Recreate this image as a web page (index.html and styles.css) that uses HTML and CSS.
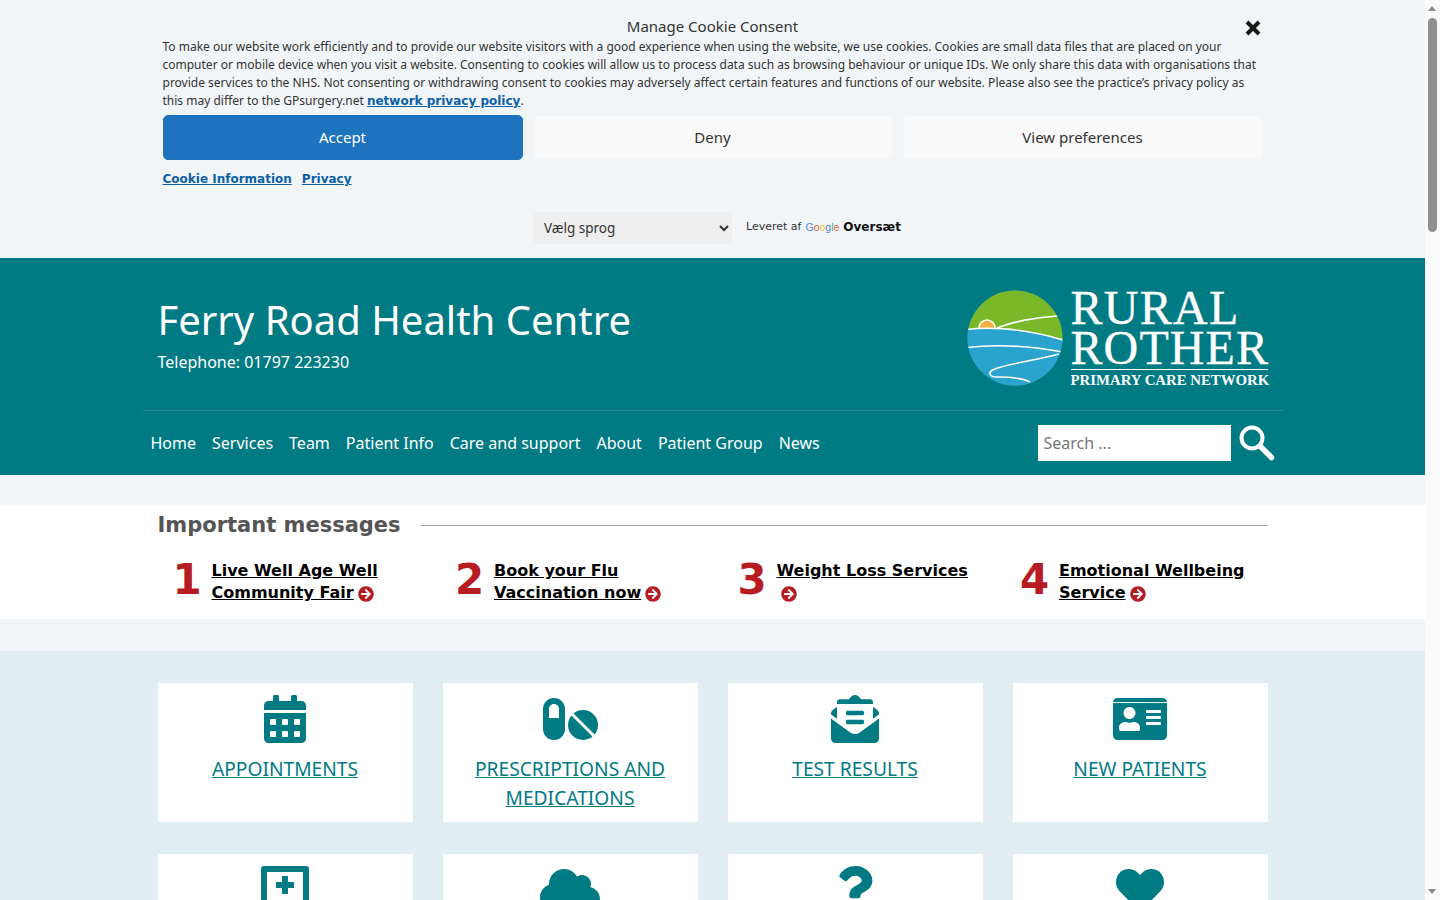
FILE: index.html
```html
<!DOCTYPE html>
<html lang="en">
<head>
    <meta charset="UTF-8">
    <meta name="viewport" content="width=device-width, initial-scale=1.0">
    <title>Ferry Road Health Centre</title>
    <link rel="stylesheet" href="styles.css">
</head>
<body>
    <div class="cookie-banner">
        <div class="cookie-inner">
            <div class="cookie-title">Manage Cookie Consent</div>
            <button class="cookie-close" aria-label="Close">
                <svg viewBox="0 0 16 16" width="16" height="16"><path d="M2 2l12 12M14 2L2 14"/></svg>
            </button>
            <p class="cookie-text">To make our website work efficiently and to provide our website visitors with a good experience when using the website, we use cookies. Cookies are small data files that are placed on your computer or mobile device when you visit a website. Consenting to cookies will allow us to process data such as browsing behaviour or unique IDs. We only share this data with organisations that provide services to the NHS. Not consenting or withdrawing consent to cookies may adversely affect certain features and functions of our website. Please also see the practice’s privacy policy as this may differ to the GPsurgery.net <a href="#">network privacy policy</a>.</p>
            <div class="cookie-buttons">
                <button class="cookie-button accept">Accept</button>
                <button class="cookie-button">Deny</button>
                <button class="cookie-button">View preferences</button>
            </div>
            <div class="cookie-links">
                <a href="#">Cookie Information</a>
                <a href="#">Privacy</a>
            </div>
        </div>
        <div class="translate-row">
            <select class="language-select">
                <option>Vælg sprog</option>
            </select>
            <div class="translate-credit">
                <span>Leveret af</span>
                <span class="google-word"><span class="g-blue">G</span><span class="g-red">o</span><span class="g-yellow">o</span><span class="g-blue">g</span><span class="g-green">l</span><span class="g-red">e</span></span>
                <a href="#">Oversæt</a>
            </div>
        </div>
    </div>

    <header class="site-header">
        <div class="header-container">
            <div class="header-top">
                <div class="practice">
                    <h1>Ferry Road Health Centre</h1>
                    <div class="telephone">Telephone: 01797 223230</div>
                </div>
                <div class="logo">
                    <svg class="logo-mark" viewBox="0 0 96 96" width="96" height="96">
                        <defs><clipPath id="logoClip"><circle cx="48" cy="48" r="47.500"/></clipPath></defs>
                        <g clip-path="url(#logoClip)">
                            <rect width="96" height="96" fill="#2aa3cf"/>
                            <path d="M0 0H96V50C70 41 30 38 0 39.500z" fill="#7ab829"/>
                            <circle cx="20" cy="38" r="8" fill="#f5b041" stroke="#fff" stroke-width="1.500"/>
                            <path d="M0 39.500C14 37.500 50 36 96 50V96H0z" fill="#2aa3cf"/>
                            <g fill="none" stroke="#fff" stroke-width="1.600">
                                <path d="M0 39.500C14 37.500 50 36 96 50"/>
                                <path d="M30 38C45 32 70 27 90 26"/>
                                <path d="M0 57.500C28 54 62 56 96 62"/>
                                <path d="M92 64C70 70 40 74 28 79C20 82 22 87 30 87C42 87 55 88 63 92"/>
                            </g>
                        </g>
                    </svg>
                    <div class="logo-words">
                        <div class="logo-rural">RURAL</div>
                        <div class="logo-rother">ROTHER</div>
                        <div class="logo-network">PRIMARY CARE NETWORK</div>
                    </div>
                </div>
            </div>
            <nav class="main-nav">
                <ul>
                    <li><a href="#">Home</a></li>
                    <li><a href="#">Services</a></li>
                    <li><a href="#">Team</a></li>
                    <li><a href="#">Patient Info</a></li>
                    <li><a href="#">Care and support</a></li>
                    <li><a href="#">About</a></li>
                    <li><a href="#">Patient Group</a></li>
                    <li><a href="#">News</a></li>
                </ul>
                <form class="search-form">
                    <input type="text" placeholder="Search ...">
                    <button type="button" class="search-button" aria-label="Search">
                        <svg viewBox="0 0 36 36" width="36" height="36"><circle cx="13" cy="13" r="10.500" fill="none" stroke="#fff" stroke-width="4"/><path d="M21.500 21.500l11 11" stroke="#fff" stroke-width="5.500" stroke-linecap="round"/></svg>
                    </button>
                </form>
            </nav>
        </div>
    </header>

    <section class="messages">
        <div class="container">
            <div class="messages-heading">
                <h2>Important messages</h2>
                <span class="heading-rule"></span>
            </div>
            <div class="messages-list">
                <div class="message">
                    <span class="message-number">1</span>
                    <div class="message-text"><a href="#">Live Well Age Well Community Fair</a><svg class="arrow" viewBox="0 0 512 512"><use href="#arrowCircle"/></svg></div>
                </div>
                <div class="message">
                    <span class="message-number">2</span>
                    <div class="message-text"><a href="#">Book your Flu Vaccination now</a><svg class="arrow" viewBox="0 0 512 512"><use href="#arrowCircle"/></svg></div>
                </div>
                <div class="message">
                    <span class="message-number">3</span>
                    <div class="message-text"><a href="#">Weight Loss Services</a><svg class="arrow" viewBox="0 0 512 512"><use href="#arrowCircle"/></svg></div>
                </div>
                <div class="message">
                    <span class="message-number">4</span>
                    <div class="message-text"><a href="#">Emotional Wellbeing Service</a><svg class="arrow" viewBox="0 0 512 512"><use href="#arrowCircle"/></svg></div>
                </div>
            </div>
        </div>
    </section>

    <section class="services">
        <div class="container service-grid">
            <div class="service-card">
                <svg class="service-icon" viewBox="0 0 448 512" width="42" height="48"><path d="M0 464c0 26.500 21.500 48 48 48h352c26.500 0 48-21.500 48-48V192H0v272zm320-196c0-6.600 5.400-12 12-12h40c6.600 0 12 5.400 12 12v40c0 6.600-5.400 12-12 12h-40c-6.600 0-12-5.400-12-12v-40zm0 128c0-6.600 5.400-12 12-12h40c6.600 0 12 5.400 12 12v40c0 6.600-5.400 12-12 12h-40c-6.600 0-12-5.400-12-12v-40zM192 268c0-6.600 5.400-12 12-12h40c6.600 0 12 5.400 12 12v40c0 6.600-5.400 12-12 12h-40c-6.600 0-12-5.400-12-12v-40zm0 128c0-6.600 5.400-12 12-12h40c6.600 0 12 5.400 12 12v40c0 6.600-5.400 12-12 12h-40c-6.600 0-12-5.400-12-12v-40zM64 268c0-6.600 5.400-12 12-12h40c6.600 0 12 5.400 12 12v40c0 6.600-5.400 12-12 12H76c-6.600 0-12-5.400-12-12v-40zm0 128c0-6.600 5.400-12 12-12h40c6.600 0 12 5.400 12 12v40c0 6.600-5.400 12-12 12H76c-6.600 0-12-5.400-12-12v-40zM400 64h-48V16c0-8.800-7.200-16-16-16h-32c-8.800 0-16 7.200-16 16v48H160V16c0-8.800-7.200-16-16-16h-32c-8.800 0-16 7.200-16 16v48H48C21.500 64 0 85.500 0 112v48h448v-48c0-26.500-21.500-48-48-48z"/></svg>
                <a href="#">APPOINTMENTS</a>
            </div>
            <div class="service-card">
                <svg class="service-icon" viewBox="0 0 56 48" width="56" height="48">
                    <path fill-rule="evenodd" d="M12 3C5.900 3 1 7.900 1 14V34C1 40.100 5.900 45 12 45S23 40.100 23 34V14C23 7.900 18.100 3 12 3zM12 9C9.200 9 7 11.200 7 14V23H17V14C17 11.200 14.800 9 12 9z"/>
                    <circle cx="41" cy="30" r="15"/>
                    <path d="M30 19L52 41" stroke="#fff" stroke-width="3"/>
                </svg>
                <a href="#">PRESCRIPTIONS AND MEDICATIONS</a>
            </div>
            <div class="service-card">
                <svg class="service-icon" viewBox="0 0 512 512" width="48" height="48">
                    <path d="M176 216h160c8.840 0 16-7.160 16-16v-16c0-8.840-7.160-16-16-16H176c-8.840 0-16 7.160-16 16v16c0 8.840 7.160 16 16 16zm-16 80c0 8.840 7.160 16 16 16h160c8.840 0 16-7.160 16-16v-16c0-8.840-7.160-16-16-16H176c-8.840 0-16 7.160-16 16v16zm96 121.130c-16.420 0-32.840-5.060-46.860-15.190L0 250.860V464c0 26.510 21.490 48 48 48h416c26.510 0 48-21.490 48-48V250.860L302.860 401.940c-14.020 10.120-30.440 15.190-46.860 15.190z"/>
                    <path d="M256 0c-13 0-26 4-36 12L190 44H96a32 32 0 0 0-32 32v48L18 160C7 168 0 182 0 196v12l64 46V96h384v158l64-46v-12c0-14-7-28-18-36l-46-36V76a32 32 0 0 0-32-32H322L292 12C282 4 269 0 256 0z"/>
                </svg>
                <a href="#">TEST RESULTS</a>
            </div>
            <div class="service-card">
                <svg class="service-icon" viewBox="0 0 576 512" width="54" height="48">
                    <path d="M528 32H48C21.500 32 0 53.500 0 80v352c0 26.500 21.500 48 48 48h480c26.500 0 48-21.500 48-48V80c0-26.500-21.500-48-48-48zm-352 96c35.300 0 64 28.700 64 64s-28.700 64-64 64-64-28.700-64-64 28.700-64 64-64zm112 236.800c0 10.600-10 19.200-22.400 19.200H86.400C74 384 64 375.400 64 364.800v-19.200c0-31.800 30.100-57.600 67.200-57.600h5c12.300 5.100 25.700 8 39.800 8s27.600-2.900 39.800-8h5c37.100 0 67.200 25.800 67.200 57.600v19.200zM512 312c0 4.400-3.600 8-8 8H360c-4.400 0-8-3.600-8-8v-16c0-4.400 3.600-8 8-8h144c4.400 0 8 3.600 8 8v16zm0-64c0 4.400-3.600 8-8 8H360c-4.400 0-8-3.600-8-8v-16c0-4.400 3.600-8 8-8h144c4.400 0 8 3.600 8 8v16zm0-64c0 4.400-3.600 8-8 8H360c-4.400 0-8-3.600-8-8v-16c0-4.400 3.600-8 8-8h144c4.400 0 8 3.600 8 8v16z"/>
                    <rect y="76" width="576" height="10" fill="#fff"/>
                </svg>
                <a href="#">NEW PATIENTS</a>
            </div>
            <div class="service-card">
                <svg class="service-icon" viewBox="0 0 48 48" width="48" height="48">
                    <path fill-rule="evenodd" d="M3 0H45a3 3 0 0 1 3 3V45a3 3 0 0 1-3 3H3a3 3 0 0 1-3-3V3a3 3 0 0 1 3-3zM6 6V42H42V6z"/>
                    <path d="M21 10h6v6h6v6h-6v6h-6v-6h-6v-6h6z"/>
                </svg>
                <a href="#">SICK NOTES</a>
            </div>
            <div class="service-card">
                <svg class="service-icon" viewBox="0 0 640 512" width="60" height="48"><path d="M537.600 226.600c4.100-10.700 6.400-22.400 6.400-34.600 0-53-43-96-96-96-19.700 0-38.100 6-53.300 16.200C367 64.200 315.300 32 256 32c-88.400 0-160 71.600-160 160 0 2.700.1 5.400.2 8.100C40.200 219.800 0 273.200 0 336c0 79.500 64.500 144 144 144h368c70.700 0 128-57.300 128-128 0-61.900-44-113.600-102.400-125.400z"/></svg>
                <a href="#">ONLINE SERVICES</a>
            </div>
            <div class="service-card">
                <svg class="service-icon" viewBox="0 0 384 512" width="36" height="48"><path d="M202.021 0C122.202 0 70.503 32.703 29.914 91.026c-7.363 10.580-5.093 25.086 5.178 32.874l43.138 32.709c10.373 7.865 25.132 6.026 33.253-4.148 25.049-31.381 43.630-49.449 82.757-49.449 30.764 0 68.816 19.799 68.816 49.631 0 22.552-18.617 34.134-48.993 51.164-35.423 19.860-82.299 44.576-82.299 106.405V320c0 13.255 10.745 24 24 24h72.471c13.255 0 24-10.745 24-24v-5.773c0-42.860 125.268-44.645 125.268-160.627C377.504 66.256 286.902 0 202.021 0zM192 373.459c-38.196 0-69.271 31.075-69.271 69.271 0 38.195 31.075 69.270 69.271 69.270s69.271-31.075 69.271-69.271-31.075-69.270-69.271-69.270z"/></svg>
                <a href="#">HELP AND ADVICE</a>
            </div>
            <div class="service-card">
                <svg class="service-icon" viewBox="0 0 512 512" width="48" height="48"><path d="M462.300 62.600C407.500 15.900 326 24.300 275.700 76.200L256 96.500l-19.700-20.300C186.100 24.300 104.500 15.900 49.700 62.600c-62.800 53.600-66.100 149.800-9.900 207.900l193.500 199.800c12.500 12.900 32.800 12.900 45.300 0l193.500-199.800c56.300-58.100 53-154.300-9.800-207.900z"/></svg>
                <a href="#">WELLBEING</a>
            </div>
        </div>
    </section>

    <div class="page-scrollbar">
        <span class="scroll-up"></span>
        <span class="scroll-thumb"></span>
        <span class="scroll-down"></span>
    </div>

    <svg class="icon-defs" width="0" height="0">
        <symbol id="arrowCircle" viewBox="0 0 512 512">
            <path d="M256 8c137 0 248 111 248 248S393 504 256 504 8 393 8 256 119 8 256 8zm-28.900 143.600l75.500 72.400H120c-13.300 0-24 10.700-24 24v16c0 13.300 10.700 24 24 24h182.600l-75.500 72.400c-9.700 9.300-9.900 24.800-.4 34.300l11 10.900c9.400 9.400 24.600 9.400 33.900 0L404.300 273c9.400-9.400 9.400-24.600 0-33.900L271.600 106.300c-9.400-9.400-24.600-9.400-33.900 0l-11 10.900c-9.300 9.600-9.100 25.100.4 34.400z"/>
        </symbol>
    </svg>
</body>
</html>
```

FILE: styles.css
```css
body {
    width: 1425px;
    font-family: "Noto Sans", Arial, sans-serif;
    background-color: #f1f5f7;
    color: #333;
    margin: 0;
    padding: 0;
}

a {
    color: inherit;
}

.container {
    width: 1110px;
    margin: 0 auto;
}

/* Cookie banner */
.cookie-banner {
    height: 258px;
    background-color: #f1f5f7;
}

.cookie-inner {
    position: relative;
    width: 1100px;
    margin: 0 auto;
    padding-top: 16px;
}

.cookie-title {
    font-size: 15px;
    line-height: 20px;
    text-align: center;
}

.cookie-close {
    position: absolute;
    top: 20px;
    right: 2px;
    width: 16px;
    height: 16px;
    padding: 0;
    border: none;
    background: none;
}

.cookie-close svg {
    display: block;
    fill: none;
    stroke: #1a1a1a;
    stroke-width: 4;
}

.cookie-text {
    margin: 2px 0 5px;
    font-size: 12px;
    line-height: 18px;
}

.cookie-text a,
.cookie-links a {
    font-family: "DejaVu Sans", Verdana, sans-serif;
    font-weight: bold;
    color: #0b60a8;
}

.cookie-buttons {
    display: flex;
    gap: 10px;
}

.cookie-button {
    flex: 1;
    height: 45px;
    padding: 0 0 1px;
    font-family: inherit;
    font-size: 15px;
    color: #333;
    background-color: #f9f9f9;
    border: 1px solid #f1f5f7;
    border-radius: 5px;
}

.cookie-button.accept {
    background-color: #1e73be;
    border-color: #1e73be;
    color: #fff;
}

.cookie-links {
    display: flex;
    gap: 10px;
    margin-top: 10px;
    font-size: 12px;
    line-height: 18px;
}

.translate-row {
    display: flex;
    align-items: center;
    gap: 14px;
    margin: 24px 0 0 534px;
}

.language-select {
    width: 198px;
    height: 32px;
    padding: 0 6px;
    font-family: inherit;
    font-size: 13.500px;
    color: #333;
    background-color: #eeeeee;
    border: none;
    border-radius: 4px;
}

.translate-credit {
    display: flex;
    align-items: center;
    gap: 4px;
    margin-top: -3px;
    font-family: "DejaVu Sans", Verdana, sans-serif;
    font-size: 11px;
    white-space: nowrap;
}

.translate-credit a {
    font-size: 12px;
    font-weight: bold;
    color: #111;
    text-decoration: none;
}

.google-word {
    font-family: "Liberation Sans", Arial, sans-serif;
    font-size: 10.500px;
}

.g-blue { color: #4a85f0; }
.g-red { color: #e8604f; }
.g-yellow { color: #f2bd3c; }
.g-green { color: #4cae58; }

/* Header */
.site-header {
    background-color: #007a83;
    color: #fff;
}

.header-container {
    width: 1140px;
    margin: 0 auto;
}

.header-top {
    display: flex;
    justify-content: space-between;
    height: 153px;
    padding: 32px 15px 0;
    box-sizing: border-box;
    border-bottom: 1px solid #2a8e95;
}

.practice h1 {
    margin: 0;
    font-size: 40px;
    font-weight: normal;
    line-height: 60px;
}

.telephone {
    font-size: 16px;
    line-height: 24px;
}

.logo {
    display: flex;
    gap: 8px;
    height: 98px;
}

.logo-words {
    width: 197px;
    margin-top: -2px;
    font-family: "Liberation Serif", "Times New Roman", serif;
    color: #fff;
}

.logo-rural,
.logo-rother {
    font-size: 48px;
    line-height: 40px;
    white-space: nowrap;
    -webkit-text-stroke: 0.300px #fff;
}

.logo-rural {
    letter-spacing: 1.300px;
}

.logo-rother {
    letter-spacing: 1.100px;
}

.logo-network {
    margin-top: 1px;
    padding-top: 3px;
    border-top: 1px solid #fff;
    font-size: 14.800px;
    font-weight: bold;
    line-height: 15px;
    white-space: nowrap;
}

.main-nav {
    display: flex;
    align-items: center;
    justify-content: space-between;
    height: 64px;
}

.main-nav ul {
    display: flex;
    margin: 0;
    padding: 0;
    list-style: none;
}

.main-nav a {
    display: block;
    padding: 0 8px;
    font-size: 16px;
    line-height: 24px;
    color: #fff;
    text-decoration: none;
}

.search-form {
    display: flex;
    align-items: center;
    gap: 8px;
    margin-right: 8px;
}

.search-form input {
    width: 193px;
    height: 36px;
    padding: 0 6px;
    box-sizing: border-box;
    font-family: inherit;
    font-size: 16px;
    background-color: #fff;
    border: none;
}

.search-button {
    display: block;
    width: 36px;
    height: 36px;
    padding: 0;
    background: none;
    border: none;
}

.search-button svg {
    display: block;
}

/* Important messages */
.messages {
    margin: 30px 0 32px;
    height: 114px;
    background-color: #fff;
}

.messages-heading {
    display: flex;
    align-items: center;
    gap: 20px;
    height: 40px;
}

.messages-heading h2 {
    margin: 0;
    font-family: "DejaVu Sans", Verdana, sans-serif;
    font-size: 21px;
    font-weight: bold;
    color: #555;
}

.heading-rule {
    flex: 1;
    border-top: 1px solid #aaa;
}

.messages-list {
    display: grid;
    grid-template-columns: repeat(4, 282.500px);
    margin-top: 14px;
}

.message {
    display: flex;
    gap: 13px;
    padding-left: 15px;
}

.message-number {
    flex: none;
    width: 26px;
    margin-top: -1px;
    font-family: "DejaVu Sans", Verdana, sans-serif;
    font-size: 42px;
    font-weight: bold;
    line-height: 44px;
    color: #b71c23;
}

.message-text {
    width: 205px;
    padding-top: 1px;
    font-family: "DejaVu Sans", Verdana, sans-serif;
    font-size: 16px;
    font-weight: bold;
    line-height: 22px;
}

.message-text a {
    color: #000;
}

.arrow {
    width: 16px;
    height: 16px;
    margin-left: 4px;
    fill: #b71c23;
    vertical-align: -4px;
}

/* Service cards */
.services {
    min-height: 2989px;
    padding-top: 32px;
    box-sizing: border-box;
    background-color: #e0eef2;
}

.service-grid {
    display: grid;
    grid-template-columns: repeat(4, 255px);
    gap: 32px 30px;
}

.service-card {
    padding: 12px 20px 10px;
    text-align: center;
    background-color: #fff;
    font-size: 19.200px;
    line-height: 29px;
}

.service-card a {
    color: #007a83;
}

.service-icon {
    display: block;
    margin: 0 auto 11px;
    fill: #007a83;
}

/* Scrollbar the screenshot shows along the right edge */
.page-scrollbar {
    position: fixed;
    top: 0;
    right: 0;
    bottom: 0;
    width: 15px;
    background-color: #fafafa;
}

.scroll-thumb {
    position: absolute;
    top: 18px;
    left: 3px;
    width: 9px;
    height: 214px;
    background-color: #909090;
    border-radius: 5px;
}

.scroll-up,
.scroll-down {
    position: absolute;
    left: 3px;
    width: 0;
    height: 0;
    border-left: 4.500px solid transparent;
    border-right: 4.500px solid transparent;
}

.scroll-up {
    top: 6px;
    border-bottom: 5px solid #8a8a8a;
}

.scroll-down {
    bottom: 6px;
    border-top: 5px solid #8a8a8a;
}

.icon-defs {
    position: absolute;
}
```
